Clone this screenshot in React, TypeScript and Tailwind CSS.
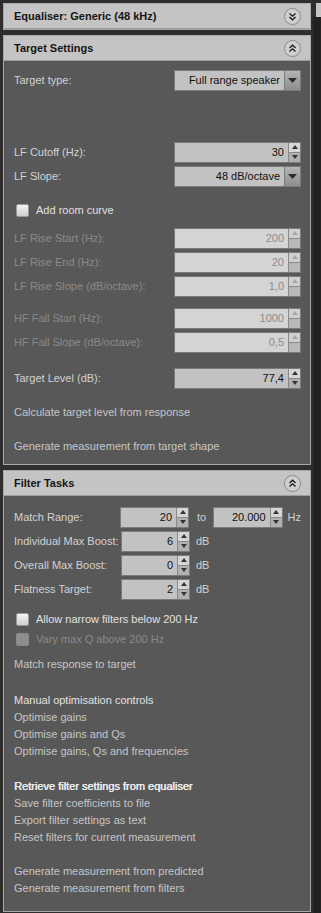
import type { ReactNode } from 'react'

const font = { fontFamily: '"Liberation Sans", Arial, sans-serif' }

function Chevrons(props: { up?: boolean }) {
  const { up } = props
  return (
    <span className="flex items-center justify-center w-[17px] h-[17px] rounded-full border border-[#8a8a8a] bg-[#cfcfcf]">
      <svg width="9" height="9" viewBox="0 0 9 9" fill="none" stroke="#1a1a1a" strokeWidth="1.3">
        {up ? (
          <>
            <path d="M1.5 4 L4.5 1.2 L7.5 4" />
            <path d="M1.5 7.6 L4.5 4.8 L7.5 7.6" />
          </>
        ) : (
          <>
            <path d="M1.5 1.4 L4.5 4.2 L7.5 1.4" />
            <path d="M1.5 5 L4.5 7.8 L7.5 5" />
          </>
        )}
      </svg>
    </span>
  )
}

function Header(props: { title: string; up?: boolean }) {
  return (
    <div className="flex items-center justify-between h-[25px] pl-[10px] pr-[9px] bg-[#c4c4c4] border-b border-[#9c9c9c]">
      <span className="text-[11px] font-bold text-[#141414]">{props.title}</span>
      <Chevrons up={props.up} />
    </div>
  )
}

function Spin(props: { value: string; width: number; disabled?: boolean }) {
  const { value, width, disabled } = props
  const arrow = disabled ? '#a8a8a8' : '#333'
  return (
    <div className="flex h-[21px] border border-[#7a7a7a]" style={{ width }}>
      <div
        className={`flex-1 flex items-center justify-end pr-[4px] text-[11px] ${
          disabled ? 'bg-[#d4d4d4] text-[#8c8c8c]' : 'bg-[#c2c2c2] text-[#101010]'
        }`}
      >
        {value}
      </div>
      <div className="flex flex-col w-[12px] border-l border-[#8a8a8a]">
        <div className={`flex-1 flex items-center justify-center border-b border-[#8a8a8a] ${disabled ? 'bg-[#d0d0d0]' : 'bg-[#d6d6d6]'}`}>
          <svg width="6" height="4" viewBox="0 0 6 4">
            <path d="M0 4 L3 0 L6 4 Z" fill={arrow} />
          </svg>
        </div>
        <div className={`flex-1 flex items-center justify-center ${disabled ? 'bg-[#b8b8b8]' : 'bg-[#b0b0b0]'}`}>
          {!disabled && (
            <svg width="6" height="4" viewBox="0 0 6 4">
              <path d="M0 0 L3 4 L6 0 Z" fill={arrow} />
            </svg>
          )}
        </div>
      </div>
    </div>
  )
}

function Select(props: { value: string }) {
  return (
    <div className="flex h-[21px] w-[127px] border border-[#7a7a7a]">
      <div className="flex-1 flex items-center justify-end pr-[4px] text-[11px] text-[#101010] bg-[#c2c2c2]">
        {props.value}
      </div>
      <div className="flex items-center justify-center w-[16px] border-l border-[#7a7a7a] bg-gradient-to-b from-[#b4b4b4] to-[#8e8e8e]">
        <svg width="9" height="5" viewBox="0 0 9 5">
          <path d="M0 0 L4.5 5 L9 0 Z" fill="#2a2a2a" />
        </svg>
      </div>
    </div>
  )
}

function Row(props: { label: string; disabled?: boolean; children: ReactNode; className?: string }) {
  return (
    <div className={`flex items-center justify-between h-[24px] ${props.className ?? ''}`}>
      <span className={`text-[11px] ${props.disabled ? 'text-[#8a8a8a]' : 'text-[#d2d2d2]'}`}>{props.label}</span>
      {props.children}
    </div>
  )
}

function Check(props: { label: string; disabled?: boolean; className?: string }) {
  return (
    <div className={`flex items-center h-[20px] pl-[2px] ${props.className ?? ''}`}>
      <span
        className={`w-[13px] h-[13px] rounded-[2px] border ${
          props.disabled ? 'border-[#8a8a8a] bg-[#8e8e8e]' : 'border-[#9a9a9a] bg-gradient-to-b from-[#f4f4f4] to-[#cfcfcf]'
        }`}
      />
      <span className={`ml-[7px] text-[11px] ${props.disabled ? 'text-[#8a8a8a]' : 'text-[#e0e0e0]'}`}>{props.label}</span>
    </div>
  )
}

function Action(props: { children: ReactNode; className?: string }) {
  return <div className={`h-[17px] leading-[17px] text-[11px] text-[#c6c6c6] ${props.className ?? ''}`}>{props.children}</div>
}

function FilterRow(props: { label: string; value: string; unit?: string; children?: ReactNode }) {
  return (
    <div className="flex items-center h-[24px]">
      <span className="w-[107px] text-[11px] text-[#d2d2d2] whitespace-nowrap">{props.label}</span>
      <Spin value={props.value} width={69} />
      {props.unit && <span className="ml-[6px] text-[11px] text-[#d2d2d2]">{props.unit}</span>}
      {props.children}
    </div>
  )
}

export default function App() {
  return (
    <div className="flex w-[321px] h-[913px] bg-[#2e2e2e] overflow-hidden" style={font}>
      <div className="w-[311px] pl-[3px] pt-[3px]">
        <div className="border border-[#a8a8a8]">
          <Header title="Equaliser: Generic (48 kHz)" />
        </div>

        <div className="mt-[5px] border border-[#a8a8a8] bg-[#585858]">
          <Header title="Target Settings" up />
          <div className="pl-[10px] pr-[9px] pt-[7px] pb-[9px]">
            <Row label="Target type:">
              <Select value="Full range speaker" />
            </Row>
            <div className="h-[48px]" />
            <Row label="LF Cutoff (Hz):">
              <Spin value="30" width={127} />
            </Row>
            <Row label="LF Slope:">
              <Select value="48 dB/octave" />
            </Row>
            <Check label="Add room curve" className="mt-[12px]" />
            <Row label="LF Rise Start (Hz):" disabled className="mt-[6px]">
              <Spin value="200" width={127} disabled />
            </Row>
            <Row label="LF Rise End (Hz):" disabled>
              <Spin value="20" width={127} disabled />
            </Row>
            <Row label="LF Rise Slope (dB/octave):" disabled>
              <Spin value="1,0" width={127} disabled />
            </Row>
            <Row label="HF Fall Start (Hz):" disabled className="mt-[8px]">
              <Spin value="1000" width={127} disabled />
            </Row>
            <Row label="HF Fall Slope (dB/octave):" disabled>
              <Spin value="0,5" width={127} disabled />
            </Row>
            <Row label="Target Level (dB):" className="mt-[12px]">
              <Spin value="77,4" width={127} />
            </Row>
            <Action className="mt-[14px]">Calculate target level from response</Action>
            <Action className="mt-[17px]">Generate measurement from target shape</Action>
          </div>
        </div>

        <div className="mt-[5px] border border-[#a8a8a8] bg-[#585858]">
          <Header title="Filter Tasks" up />
          <div className="pl-[10px] pr-[9px] pt-[9px] pb-[14px]">
            <FilterRow label="Match Range:" value="20">
              <span className="ml-[8px] w-[16px] text-[11px] text-[#d2d2d2]">to</span>
              <Spin value="20.000" width={70} />
              <span className="ml-[5px] text-[11px] text-[#d2d2d2]">Hz</span>
            </FilterRow>
            <FilterRow label="Individual Max Boost:" value="6" unit="dB" />
            <FilterRow label="Overall Max Boost:" value="0" unit="dB" />
            <FilterRow label="Flatness Target:" value="2" unit="dB" />
            <Check label="Allow narrow filters below 200 Hz" className="mt-[8px]" />
            <Check label="Vary max Q above 200 Hz" disabled />
            <Action className="mt-[7px]">Match response to target</Action>
            <Action className="mt-[19px] text-[#e2e2e2]">Manual optimisation controls</Action>
            <Action>Optimise gains</Action>
            <Action>Optimise gains and Qs</Action>
            <Action>Optimise gains, Qs and frequencies</Action>
            <Action className="mt-[18px] text-[#f0f0f0] [text-shadow:0.4px_0_0_#f0f0f0]">Retrieve filter settings from equaliser</Action>
            <Action>Save filter coefficients to file</Action>
            <Action>Export filter settings as text</Action>
            <Action>Reset filters for current measurement</Action>
            <Action className="mt-[17px]">Generate measurement from predicted</Action>
            <Action>Generate measurement from filters</Action>
          </div>
        </div>
      </div>
      <div className="ml-[2px] w-[8px] flex flex-col">
        <div className="mt-[3px] h-[14px] ml-[3px] bg-[#c4c4c4]" />
        <div className="flex-1 bg-[#222]" />
      </div>
    </div>
  )
}
